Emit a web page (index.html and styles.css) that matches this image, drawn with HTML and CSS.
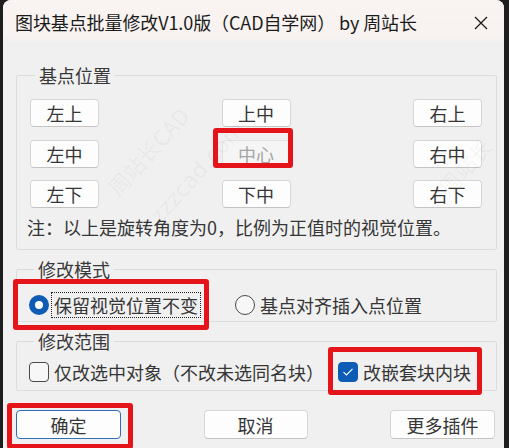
FILE: index.html
```html
<!DOCTYPE html>
<html lang="zh-CN">
<head>
    <meta charset="UTF-8">
    <title>图块基点批量修改V1.0版</title>
    <link rel="stylesheet" href="styles.css">
</head>
<body>
    <div class="window">
        <!-- Title bar -->
        <div class="titlebar">
            <span class="title">图块基点批量修改V1.0版（CAD自学网） by 周站长</span>
            <svg class="close" width="14" height="14" viewBox="0 0 14 14">
                <path d="M1 1 L13 13 M13 1 L1 13" stroke="#1b1b1b" stroke-width="1.3" fill="none"/>
            </svg>
        </div>

        <div class="content">
            <!-- Base point position -->
            <fieldset class="group group-base">
                <legend>基点位置</legend>
                <div class="pos-grid">
                    <button class="btn pos">左上</button>
                    <button class="btn pos">上中</button>
                    <button class="btn pos">右上</button>
                    <button class="btn pos">左中</button>
                    <button class="btn pos" disabled>中心</button>
                    <button class="btn pos">右中</button>
                    <button class="btn pos">左下</button>
                    <button class="btn pos">下中</button>
                    <button class="btn pos">右下</button>
                </div>
                <p class="note">注：以上是旋转角度为0，比例为正值时的视觉位置。</p>
            </fieldset>

            <!-- Mode -->
            <fieldset class="group group-mode">
                <legend>修改模式</legend>
                <div class="options">
                    <label class="opt opt-keep"><span class="radio checked"></span><span class="focus">保留视觉位置不变</span></label>
                    <label class="opt"><span class="radio"></span><span>基点对齐插入点位置</span></label>
                </div>
            </fieldset>

            <!-- Range -->
            <fieldset class="group group-range">
                <legend>修改范围</legend>
                <div class="options">
                    <label class="opt opt-only"><span class="check"></span><span>仅改选中对象（不改未选同名块）</span></label>
                    <label class="opt"><span class="check checked"><svg width="12" height="10" viewBox="0 0 12 10"><path d="M1.5 5.2 L4.5 8 L10.5 1.8" stroke="#fff" stroke-width="1.1" fill="none"/></svg></span><span>改嵌套块内块</span></label>
                </div>
            </fieldset>

            <!-- Buttons -->
            <div class="actions">
                <button class="btn act default">确定</button>
                <button class="btn act cancel">取消</button>
                <button class="btn act">更多插件</button>
            </div>
        </div>

        <!-- Watermarks -->
        <div class="watermark wm-1">周站长CAD</div>
        <div class="watermark wm-2">zzzcad.com</div>
        <div class="watermark wm-3">周站长</div>

        <!-- Red annotation boxes -->
        <div class="mark mark-center"></div>
        <div class="mark mark-keep"></div>
        <div class="mark mark-nested"></div>
        <div class="mark mark-ok"></div>
    </div>
</body>
</html>
```

FILE: styles.css
```css
body {
    margin: 0;
    background-color: #1e1e1e;
    font-family: "Noto Sans CJK SC", "Noto Sans", sans-serif;
}

.window {
    position: relative;
    width: 501px;
    height: 448px;
    margin-left: 3px;
    background-color: #f0f0f0;
    border-radius: 8px 8px 0 0;
    overflow: hidden;
    color: #333;
}

.titlebar {
    height: 44px;
    display: flex;
    align-items: center;
    justify-content: space-between;
    padding: 0 16px 0 12px;
    background: linear-gradient(#f9f4f2 0, #f8f2f0 36px, #f0f0f0 44px);
}

.title {
    font-size: 18px;
    color: #1b1b1b;
    letter-spacing: -0.1px;
}

.close {
    margin-top: 1px;
}

.content {
    padding: 21px 7px 0 13px;
}

/* group boxes */
.group {
    margin: 0;
    padding: 0;
    min-width: 0;
    border: 1px solid #dcdcdc;
    border-radius: 2px;
}

.group legend {
    margin-left: 5px;
    padding: 0 4px;
    font-size: 18px;
    line-height: 20px;
    color: #383838;
}

.group-base {
    padding: 14px 14px 12px 13px;
}

.group-mode {
    margin-top: 9px;
    padding: 16px 12px 6px 12px;
}

.group-range {
    margin-top: 9px;
    padding: 11px 12px 8px 12px;
}

/* buttons */
.btn {
    font-family: "Noto Sans CJK SC", sans-serif;
    font-size: 18px;
    line-height: 1;
    color: #363636;
    background-color: #fdfdfd;
    border: 1px solid #d6d6d6;
    border-bottom-color: #c4c4c4;
    border-radius: 4px;
    padding: 0;
}

.pos-grid {
    display: grid;
    grid-template-columns: 69px 69px 69px;
    justify-content: space-between;
    row-gap: 12.5px;
}

.pos {
    height: 28px;
}

.pos:disabled {
    background-color: #f5f5f5;
    border-color: #e2e2e2;
    color: #a5a5a5;
}

.note {
    margin: 9px 0 0 -3px;
    font-size: 18px;
    line-height: 20px;
    color: #363636;
    white-space: nowrap;
}

/* radios and checkboxes */
.options {
    display: flex;
    align-items: center;
}

.opt {
    display: flex;
    align-items: center;
    gap: 5px;
    font-size: 18px;
    line-height: 20px;
    color: #363636;
}

.opt-keep {
    margin-right: 37px;
}

.opt-only {
    margin-right: 14px;
}

.focus {
    outline: 1px dotted #222;
    outline-offset: 2px;
}

.radio {
    width: 20px;
    height: 20px;
    box-sizing: border-box;
    border: 1.5px solid #4a4a4a;
    border-radius: 50%;
    background-color: #f7f7f7;
}

.radio.checked {
    border: 6px solid #0e5cb3;
    background-color: #fff;
}

.check {
    width: 20px;
    height: 20px;
    box-sizing: border-box;
    border: 1.5px solid #4a4a4a;
    border-radius: 4px;
    background-color: #f7f7f7;
    display: flex;
    align-items: center;
    justify-content: center;
}

.check.checked {
    border-color: #0e5cb3;
    background-color: #0e5cb3;
}

/* bottom buttons */
.actions {
    margin-top: 19px;
    padding-right: 2px;
    display: flex;
    justify-content: space-between;
}

.act {
    width: 105px;
    height: 29px;
}

.act.cancel {
    width: 104px;
}

.act.default {
    border-color: #2f6fb8;
}

/* faint watermark */
.watermark {
    position: absolute;
    font-size: 22px;
    color: rgba(0, 0, 0, 0.05);
    transform: rotate(-48deg);
    white-space: nowrap;
    pointer-events: none;
}

.wm-1 { left: 90px; top: 135px; }
.wm-2 { left: 130px; top: 160px; font-family: "DejaVu Sans", sans-serif; }
.wm-3 { left: 428px; top: 150px; }

/* red annotation boxes */
.mark {
    position: absolute;
    border: 5px solid #e5141b;
    border-radius: 3px;
    pointer-events: none;
}

.mark-center { left: 210px; top: 128px; width: 70px; height: 30px; }
.mark-keep { left: 10px; top: 279px; width: 186px; height: 41px; }
.mark-nested { left: 325px; top: 347px; width: 144px; height: 38px; }
.mark-ok { left: 4px; top: 403px; width: 116px; height: 36px; }
```
